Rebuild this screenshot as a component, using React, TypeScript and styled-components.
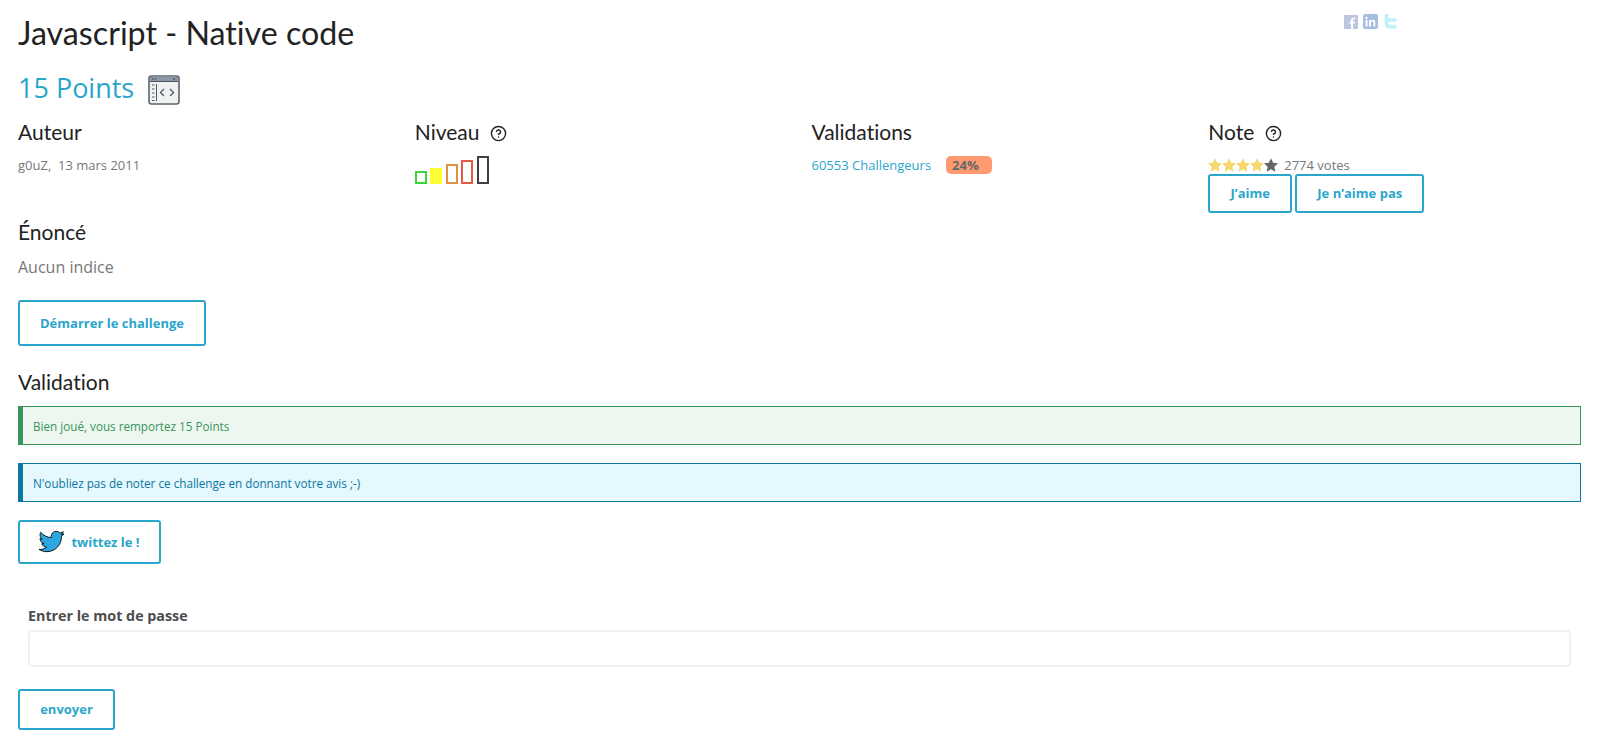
import React from "react";
import styled, { createGlobalStyle } from "styled-components";
import { CircleHelp } from "lucide-react";
import { FaTwitter } from "react-icons/fa";

const Global = createGlobalStyle`
  html, body { margin: 0; padding: 0; background: #fff; }
  body { font-family: "Open Sans", "Liberation Sans", sans-serif; color: #777; overflow: hidden; }
  * { box-sizing: border-box; }
`;

const headFont = `"Lato", "Open Sans", sans-serif`;
const blue = "#2ba6cb";

const Page = styled.div`
  width: 1599px;
  height: 754px;
  padding: 0 18px;
`;
const TitleRow = styled.header`
  display: flex;
  justify-content: space-between;
  align-items: flex-start;
  height: 64px;
  padding-right: 184px;
`;
const Title = styled.h1`
  margin: 12px 0 0;
  font: 400 32.2px/42px ${headFont};
  font-variant-ligatures: none;
  color: #222;
`;
const Social = styled.div`
  display: flex;
  align-items: center;
  gap: 5px;
  margin-top: 14px;
  opacity: 0.5;
`;
const PointsRow = styled.div`
  display: flex;
  align-items: center;
  gap: 14px;
  height: 40px;
  margin-top: 4px;
`;
const Points = styled.h2`
  margin: 0;
  font: 400 27px/40px "Open Sans", sans-serif;
  color: ${blue};
`;
const IconSlot = styled.span`
  display: flex;
  margin-top: 4px;
`;
const InfoGrid = styled.section`
  display: grid;
  grid-template-columns: repeat(4, 1fr);
  column-gap: 24px;
  width: 1563px;
  height: 100px;
  margin-top: 10px;
`;
const SubTitle = styled.h3`
  display: flex;
  align-items: center;
  gap: 11px;
  margin: 0;
  height: 28px;
  font: 400 21px/28px ${headFont};
  font-variant-ligatures: none;
  color: #222;
`;
const Meta = styled.div`
  margin-top: 10px;
  font-size: 13px;
  line-height: 18px;
  color: #777;
`;
const MetaLink = styled.a`
  color: ${blue};
  margin-right: 15px;
`;
const Badge = styled.span`
  display: inline-block;
  width: 46px;
  height: 18px;
  padding-left: 6px;
  border-radius: 5px;
  background: #ff9a70;
  color: #666;
  font-weight: 700;
  font-size: 13px;
  line-height: 18px;
`;
const Bars = styled.div`
  display: flex;
  align-items: flex-end;
  gap: 3.5px;
  margin-top: 10px;
  height: 28px;
`;
const Bar = styled.span<{ $h: number; $c: string; $fill?: boolean }>`
  display: block;
  width: 12px;
  height: ${(p) => p.$h}px;
  border: 2px solid ${(p) => p.$c};
  background: ${(p) => (p.$fill ? p.$c : "transparent")};
`;
const StarLine = styled.div`
  display: flex;
  align-items: center;
  height: 16px;
  margin-top: 11px;
  font-size: 13px;
  line-height: 16px;
  color: #777;
`;
const Votes = styled.span`
  margin-left: 6px;
`;
const Buttons = styled.div`
  display: flex;
  gap: 3px;
  margin-top: 1px;
`;
const Btn = styled.button<{ $w: number; $h: number }>`
  display: inline-flex;
  align-items: center;
  justify-content: center;
  gap: 7px;
  width: ${(p) => p.$w}px;
  height: ${(p) => p.$h}px;
  padding: 0;
  background: #fff;
  border: 2px solid ${blue};
  border-radius: 3px;
  color: ${blue};
  font: 700 13px/1 "Open Sans", sans-serif;
`;
const Section = styled.h3`
  margin: 0;
  font: 400 21px/28px ${headFont};
  font-variant-ligatures: none;
  color: #222;
`;
const ValidationTitle = styled(Section)`
  margin-bottom: 10px;
`;
const Hint = styled.p`
  margin: 10px 0 0;
  font-size: 16px;
  line-height: 22px;
  color: #777;
`;
const StartBtn = styled(Btn)`
  display: flex;
  margin-top: 22px;
  margin-bottom: 22px;
`;
const Alert = styled.div<{ $bg: string; $c: string; $bar: string }>`
  display: flex;
  align-items: center;
  width: 1563px;
  height: 39px;
  margin-bottom: 18px;
  padding: 1px 0 0 10px;
  background: ${(p) => p.$bg};
  color: ${(p) => p.$c};
  border: 1px solid ${(p) => p.$c};
  border-left: 5px solid ${(p) => p.$bar};
  font-size: 11.7px;
`;
const Form = styled.form`
  width: 1563px;
  padding: 0 10px;
  margin-top: 42px;
`;
const Label = styled.label`
  display: block;
  font-size: 14.3px;
  font-weight: 700;
  line-height: 20px;
  color: #4d4d4d;
`;
const Input = styled.input`
  display: block;
  width: 100%;
  height: 37px;
  margin-top: 4px;
  border: 2px solid #f0f0f0;
  border-radius: 4px;
  background: #fff;
`;
const SendRow = styled.div`
  margin-top: 22px;
`;

const Star = ({ c }: { c: string }) => (
  <svg width="14" height="14" viewBox="0.6 1 22.8 22">
    <polygon fill={c} points="12,1 15.4,8.3 23.4,9.3 17.5,14.8 19.1,22.8 12,18.8 4.9,22.8 6.5,14.8 .6,9.3 8.6,8.3" />
  </svg>
);

const BrowserIcon = () => (
  <svg width="32" height="30" viewBox="0 0 32 30">
    <rect x="1" y="1" width="30" height="28" rx="2.5" fill="#f0f2f2" stroke="#5c6570" strokeWidth="1.6" />
    <rect x="1.8" y="1.8" width="28.4" height="4.4" fill="#8d98a6" />
    <rect x="1.8" y="6" width="28.4" height="1" fill="#4f5762" />
    <path d="M4 4h1.5M6.5 4H8M25 4h2" stroke="#2f3640" strokeWidth="1" />
    <path d="M4 10h2.5M4 14h2.5M4 18h2.5M4 22h2.5M4 25.5h2.5" stroke="#4f5762" strokeWidth="1.2" />
    <path d="M8.5 9v17" stroke="#4f5762" strokeWidth="1" />
    <path d="M16 14l-3.5 3.5 3.5 3.5M22 14l3.500 3.500-3.500 3.500" fill="none" stroke="#4f5762" strokeWidth="1.300" />
  </svg>
);

const FbIcon = () => (
  <svg width="14" height="14" viewBox="0 0 14 14">
    <rect width="14" height="14" fill="#7d8fc0" />
    <path d="M9 14V8.500h1.800l.3-2H9V5.300c0-.7.300-1 1-1h1.100V2.400H9.500C7.800 2.400 7 3.400 7 5v1.500H5.500v2H7V14z" fill="#fff" />
  </svg>
);
const InIcon = () => (
  <svg width="15" height="15" viewBox="0 0 15 15">
    <rect width="15" height="15" rx="2" fill="#4d7fc0" />
    <rect x="2.500" y="6" width="2" height="6.500" fill="#fff" />
    <circle cx="3.500" cy="3.900" r="1.200" fill="#fff" />
    <path d="M6 6h2v1c.5-.8 1.200-1.200 2-1.200 1.500 0 2.300 1 2.300 2.700v4h-2V9c0-.9-.3-1.400-1-1.400S8 8.200 8 9v3.500H6z" fill="#fff" />
  </svg>
);
const TwIcon = () => (
  <svg width="14" height="15" viewBox="0 0 14 15">
    <path d="M3.500 1.500v7.500c0 2.500 1.500 3.800 4 3.800h4.500M3.500 6H12" fill="none" stroke="#7fe4fb" strokeWidth="3.600" strokeLinecap="round" />
  </svg>
);

const Bird = styled(FaTwitter)`
  width: 25px;
  height: 25px;
  color: #2ca7e0;
  stroke: #000;
  stroke-width: 18px;
  margin-top: -2px;
`;
const Help = styled(CircleHelp)`
  width: 17px;
  height: 17px;
  color: #222;
  margin-top: 2px;
`;

export default function App() {
  return (
    <Page>
      <Global />
      <TitleRow>
        <Title>Javascript - Native code</Title>
        <Social>
          <FbIcon />
          <InIcon />
          <TwIcon />
        </Social>
      </TitleRow>
      <PointsRow>
        <Points>15 Points</Points>
        <IconSlot><BrowserIcon /></IconSlot>
      </PointsRow>
      <InfoGrid>
        <div>
          <SubTitle>Auteur</SubTitle>
          <Meta>g0uZ,&nbsp; 13 mars 2011</Meta>
        </div>
        <div>
          <SubTitle>Niveau <Help /></SubTitle>
          <Bars>
            <Bar $h={13} $c="#3bd63b" />
            <Bar $h={16} $c="#ffff33" $fill />
            <Bar $h={20} $c="#e09040" />
            <Bar $h={24} $c="#e05a45" />
            <Bar $h={28} $c="#404040" />
          </Bars>
        </div>
        <div>
          <SubTitle>Validations</SubTitle>
          <Meta>
            <MetaLink>60553 Challengeurs</MetaLink>
            <Badge>24%</Badge>
          </Meta>
        </div>
        <div>
          <SubTitle>Note <Help /></SubTitle>
          <StarLine>
            <Star c="#f5d76e" />
            <Star c="#f5d76e" />
            <Star c="#f5d76e" />
            <Star c="#f5d76e" />
            <Star c="#666" />
            <Votes>2774 votes</Votes>
          </StarLine>
          <Buttons>
            <Btn $w={84} $h={39}>J’aime</Btn>
            <Btn $w={129} $h={39}>Je n’aime pas</Btn>
          </Buttons>
        </div>
      </InfoGrid>
      <Section>Énoncé</Section>
      <Hint>Aucun indice</Hint>
      <StartBtn $w={188} $h={46}>Démarrer le challenge</StartBtn>
      <ValidationTitle>Validation</ValidationTitle>
      <Alert $bg="#edf7f0" $c="#3a945b" $bar="#3a945b">Bien joué, vous remportez 15 Points</Alert>
      <Alert $bg="#e4f8fe" $c="#0a77a0" $bar="#0a77a0">N'oubliez pas de noter ce challenge en donnant votre avis ;-)</Alert>
      <Btn $w={143} $h={44}><Bird />twittez le !</Btn>
      <Form onSubmit={(e) => e.preventDefault()}>
        <Label>Entrer le mot de passe</Label>
        <Input type="password" />
      </Form>
      <SendRow>
        <Btn $w={97} $h={41}>envoyer</Btn>
      </SendRow>
    </Page>
  );
}
